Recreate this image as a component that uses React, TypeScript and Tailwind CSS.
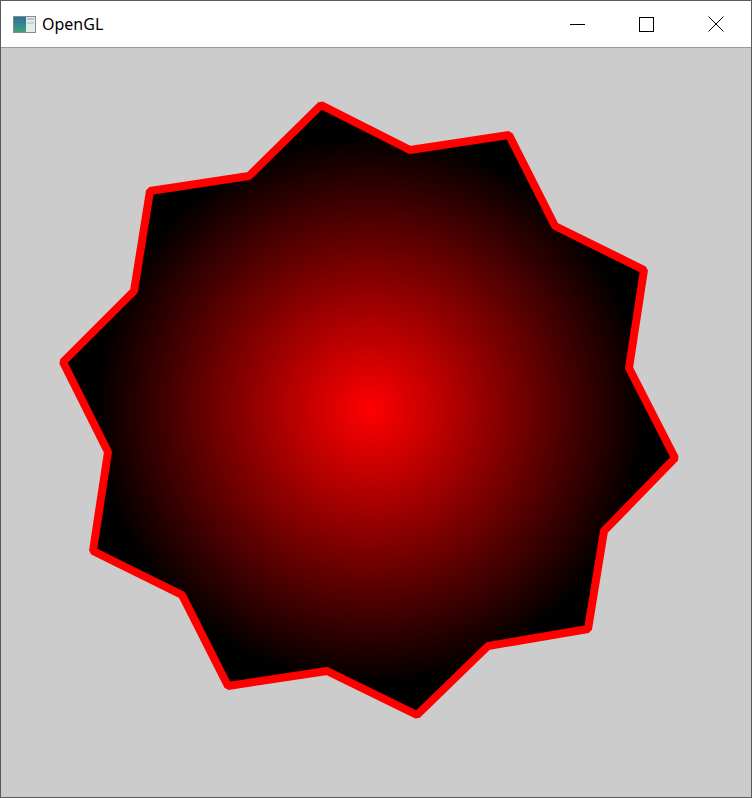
import React from "react";

const pts: [number, number][] = [
  [321, 105], [410, 150], [509, 135], [555, 226], [644, 270], [629, 368],
  [675, 458], [604, 531], [588, 629], [488, 646], [417, 715], [327, 671],
  [228, 686], [182, 595], [93, 551], [108, 452], [63, 362], [134, 291],
  [150, 191], [249, 176],
];

export default function App() {
  const poly = pts.map((p) => p.join(",")).join(" ");
  return (
    <div className="w-[752px] h-[798px] border border-[#5a5a5a] bg-white flex flex-col overflow-hidden" style={{ fontFamily: '"Noto Sans", "Open Sans", sans-serif' }}>
      <div className="h-[46px] flex items-center bg-white shrink-0">
        <div className="ml-[12px] w-[23px] h-[17px] border border-[#8a8a8a] flex overflow-hidden">
          <div className="w-[12px] h-full bg-gradient-to-b from-[#2f6f9e] to-[#3fa07a]" />
          <div className="flex-1 bg-[#e4ece8] flex flex-col gap-[2px] p-[1px]">
            <div className="h-[2px] bg-[#b8c8c0]" />
            <div className="h-[2px] bg-[#c8d4ce]" />
          </div>
        </div>
        <span className="ml-[6px] text-[16px] text-black leading-none">OpenGL</span>
        <div className="ml-auto flex h-full">
          <div className="w-[69px] h-full flex items-center justify-center">
            <div className="w-[15px] h-px bg-black" />
          </div>
          <div className="w-[69px] h-full flex items-center justify-center">
            <div className="w-[15px] h-[15px] border border-black" />
          </div>
          <div className="w-[70px] h-full flex items-center justify-center">
            <svg width="16" height="16" viewBox="0 0 16 16">
              <path d="M0.5 0.5 L15.5 15.5 M15.5 0.5 L0.5 15.5" stroke="black" strokeWidth="1" />
            </svg>
          </div>
        </div>
      </div>
      <div className="h-px bg-[#9a9a9a] shrink-0" />
      <div className="flex-1 bg-[#cccccc]">
        <svg width="750" height="749" viewBox="1 48 750 749" className="block">
          <defs>
            <radialGradient id="g" cx="370" cy="410" r="275" gradientUnits="userSpaceOnUse">
              <stop offset="0" stopColor="#ff0000" />
              <stop offset="1" stopColor="#000000" />
            </radialGradient>
          </defs>
          <polygon points={poly} fill="url(#g)" stroke="#ff0000" strokeWidth="8" strokeLinejoin="bevel" />
        </svg>
      </div>
    </div>
  );
}
